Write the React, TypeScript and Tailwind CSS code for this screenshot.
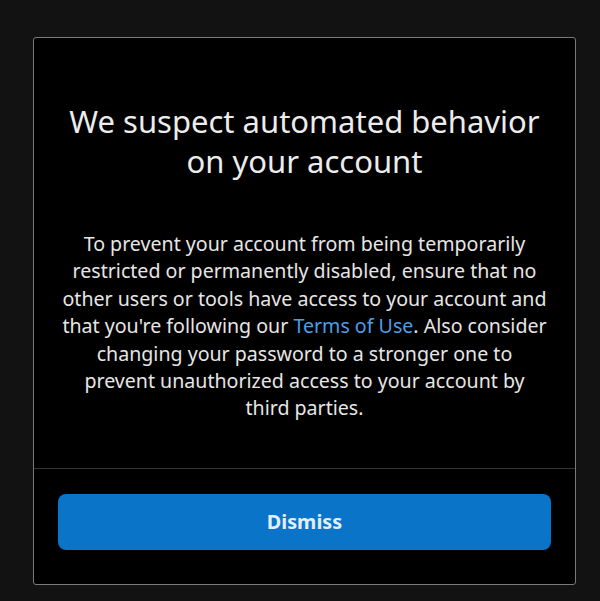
export default function App() {
  return (
    <div className="min-h-[601px] w-full bg-[#121212] pt-[37px] pl-[33px] font-['Noto_Sans',sans-serif]">
      <div className="flex w-[543px] flex-col rounded-[3px] border border-[#7a7a7a] bg-black">
        {/* Body */}
        <div className="flex flex-col items-center px-[10px] pt-[63px] pb-[46px] text-center">
          <h1 className="text-[31px] leading-[40px] font-normal text-[#ececec]">
            We suspect automated behavior
            <br />
            on your account
          </h1>
          <p className="mt-[49px] text-[19.6px] leading-[27.4px] text-[#e6e6e6]">
            To prevent your account from being temporarily
            <br />
            restricted or permanently disabled, ensure that no
            <br />
            other users or tools have access to your account and
            <br />
            that you're following our{" "}
            <a href="#" className="text-[#4a9fe8]">
              Terms of Use
            </a>
            . Also consider
            <br />
            changing your password to a stronger one to
            <br />
            prevent unauthorized access to your account by
            <br />
            third parties.
          </p>
        </div>

        <div className="h-px w-full bg-[#363636]" />

        {/* Footer */}
        <div className="px-[24px] pt-[25px] pb-[34px]">
          <button className="flex h-[56px] w-full items-center justify-center rounded-[8px] bg-[#0a74c8] text-[19.8px] font-bold text-[#e3eefa]">
            Dismiss
          </button>
        </div>
      </div>
    </div>
  );
}
